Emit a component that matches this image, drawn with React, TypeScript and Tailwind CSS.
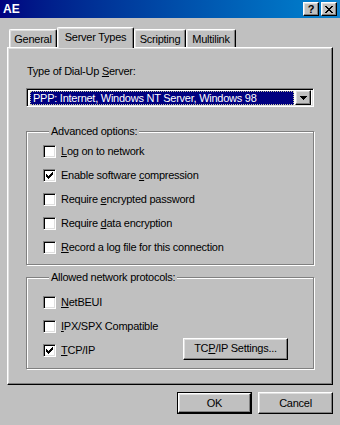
import React from 'react';

const raised =
  'bg-[#c0c0c0] border border-t-white border-l-white border-r-black border-b-black shadow-[inset_-1px_-1px_0_#808080,inset_1px_1px_0_#dfdfdf]';
const sunken =
  'border border-t-[#808080] border-l-[#808080] border-r-white border-b-white shadow-[inset_1px_1px_0_#000,inset_-1px_-1px_0_#dfdfdf]';

function U({ children }: { children: React.ReactNode }) {
  return <span className="underline underline-offset-[1px]">{children}</span>;
}

function Check() {
  return (
    <svg width="7" height="7" viewBox="0 0 7 7" className="block" shapeRendering="crispEdges">
      <path
        d="M0 2h1v3H0z M1 3h1v3H1z M2 4h1v3H2z M3 3h1v3H3z M4 2h1v3H4z M5 1h1v3H5z M6 0h1v3H6z"
        fill="#000"
      />
    </svg>
  );
}

function Checkbox({ checked, children }: { checked?: boolean; children: React.ReactNode }) {
  return (
    <div className="flex items-center gap-[5px] h-[24px]">
      <div className={`w-[13px] h-[13px] bg-white shrink-0 ${sunken}`}>
        {checked && (
          <div className="ml-[2px] mt-[2px]">
            <Check />
          </div>
        )}
      </div>
      <span className="leading-[13px] whitespace-nowrap">{children}</span>
    </div>
  );
}

function Tab({ label, active, w }: { label: string; active?: boolean; w: string }) {
  if (active) {
    return (
      <div
        className={`${w} h-[21px] -mb-[1px] bg-[#c0c0c0] border-l border-t border-r border-l-white border-t-white border-r-black rounded-t-[2px] shadow-[inset_-1px_0_0_#808080,inset_1px_1px_0_#dfdfdf] flex justify-center pt-[3px] leading-[13px] relative z-10`}
      >
        {label}
      </div>
    );
  }
  return (
    <div
      className={`${w} h-[18px] bg-[#c0c0c0] border-l border-t border-r border-l-white border-t-white border-r-black rounded-t-[2px] shadow-[inset_-1px_0_0_#808080,inset_1px_1px_0_#dfdfdf] flex justify-center pt-[3px] leading-[13px]`}
    >
      {label}
    </div>
  );
}

function Group({
  title,
  height,
  children,
  pt,
}: {
  title: string;
  height: string;
  pt: string;
  children: React.ReactNode;
}) {
  return (
    <fieldset
      className={`${height} border border-[#808080] shadow-[1px_1px_0_#fff,inset_1px_1px_0_#fff] pl-[16px] ${pt}`}
    >
      <legend className="ml-[6px] px-[2px] leading-[13px] bg-[#c0c0c0]">{title}</legend>
      {children}
    </fieldset>
  );
}

export default function App() {
  return (
    <div
      className="w-[340px] h-[425px] bg-[#c0c0c0] text-black text-[11px] tracking-[-0.25px] overflow-hidden"
      style={{ fontFamily: '"Liberation Sans", Arial, sans-serif' }}
    >
      {/* title bar */}
      <div className="h-[18px] flex items-center bg-gradient-to-r from-[#000080] to-[#1084d0] pl-[3px] pr-[3px]">
        <span className="text-white font-bold text-[12px] tracking-normal leading-none">AE</span>
        <div className="ml-auto flex gap-[2px]">
          <div className={`w-[16px] h-[14px] flex items-center justify-center ${raised}`}>
            <span className="font-bold text-[11px] leading-none tracking-normal">?</span>
          </div>
          <div className={`w-[16px] h-[14px] flex items-center justify-center ${raised}`}>
            <svg width="8" height="7" viewBox="0 0 8 7" shapeRendering="crispEdges">
              <path
                d="M0 0h2v1H0z M6 0h2v1H6z M1 1h2v1H1z M5 1h2v1H5z M2 2h4v1H2z M3 3h2v1H3z M2 4h4v1H2z M1 5h2v1H1z M5 5h2v1H5z M0 6h2v1H0z M6 6h2v1H6z"
                fill="#000"
              />
            </svg>
          </div>
        </div>
      </div>

      {/* tabs */}
      <div className="mt-[9px] h-[20px] pl-[9px] flex items-end relative z-10">
        <Tab label="General" w="w-[48px]" />
        <Tab label="Server Types" w="w-[77px]" active />
        <Tab label="Scripting" w="w-[52px]" />
        <Tab label="Multilink" w="w-[50px]" />
      </div>

      {/* panel */}
      <div
        className="ml-[7px] w-[326px] h-[338px] border border-t-white border-l-white border-r-black border-b-black shadow-[inset_-1px_-1px_0_#808080,inset_1px_1px_0_#dfdfdf] pt-[17px] px-[18px] flex flex-col"
      >
        <div className="pl-[1px] leading-[13px] h-[13px]">
          Type of Dial-Up <U>S</U>erver:
        </div>

        <div className={`mt-[10px] h-[19px] bg-white flex items-center p-[2px] ${sunken}`}>
          <div className="flex-1 h-[14px] ml-[1px] bg-[#000080] text-white leading-[12px] pl-[2px] border border-dotted border-[#c8c8a0] whitespace-nowrap overflow-hidden">
            PPP: Internet, Windows NT Server, Windows 98
          </div>
          <div className={`w-[16px] h-[15px] ml-[1px] flex items-center justify-center ${raised}`}>
            <svg width="7" height="4" viewBox="0 0 7 4" shapeRendering="crispEdges">
              <path d="M0 0h7v1H0z M1 1h5v1H1z M2 2h3v1H2z M3 3h1v1H3z" fill="#000" />
            </svg>
          </div>
        </div>

        <div className="mt-[18px]">
          <Group title="Advanced options:" height="h-[140px]" pt="pt-[1px]">
            <Checkbox>
              <U>L</U>og on to network
            </Checkbox>
            <Checkbox checked>
              Enable software <U>c</U>ompression
            </Checkbox>
            <Checkbox>
              Require <U>e</U>ncrypted password
            </Checkbox>
            <Checkbox>
              Require <U>d</U>ata encryption
            </Checkbox>
            <Checkbox>
              <U>R</U>ecord a log file for this connection
            </Checkbox>
          </Group>
        </div>

        <div className="mt-[6px]">
          <Group title="Allowed network protocols:" height="h-[98px]" pt="pt-[6px]">
            <Checkbox>
              <U>N</U>etBEUI
            </Checkbox>
            <Checkbox>
              <U>I</U>PX/SPX Compatible
            </Checkbox>
            <div className="flex items-center justify-between pr-[25px]">
              <Checkbox checked>
                <U>T</U>CP/IP
              </Checkbox>
              <button
                className={`w-[105px] h-[22px] -mt-[3px] flex items-center justify-center leading-[13px] ${raised}`}
              >
                TC<U>P</U>/IP Settings...
              </button>
            </div>
          </Group>
        </div>
      </div>

      {/* bottom buttons */}
      <div className="mt-[7px] flex justify-end pr-[7px] gap-[6px]">
        <div className="w-[75px] h-[22px] border border-black">
          <button className={`w-full h-full flex items-center justify-center leading-[13px] ${raised}`}>
            OK
          </button>
        </div>
        <button className={`w-[75px] h-[22px] flex items-center justify-center leading-[13px] ${raised}`}>
          Cancel
        </button>
      </div>
    </div>
  );
}
